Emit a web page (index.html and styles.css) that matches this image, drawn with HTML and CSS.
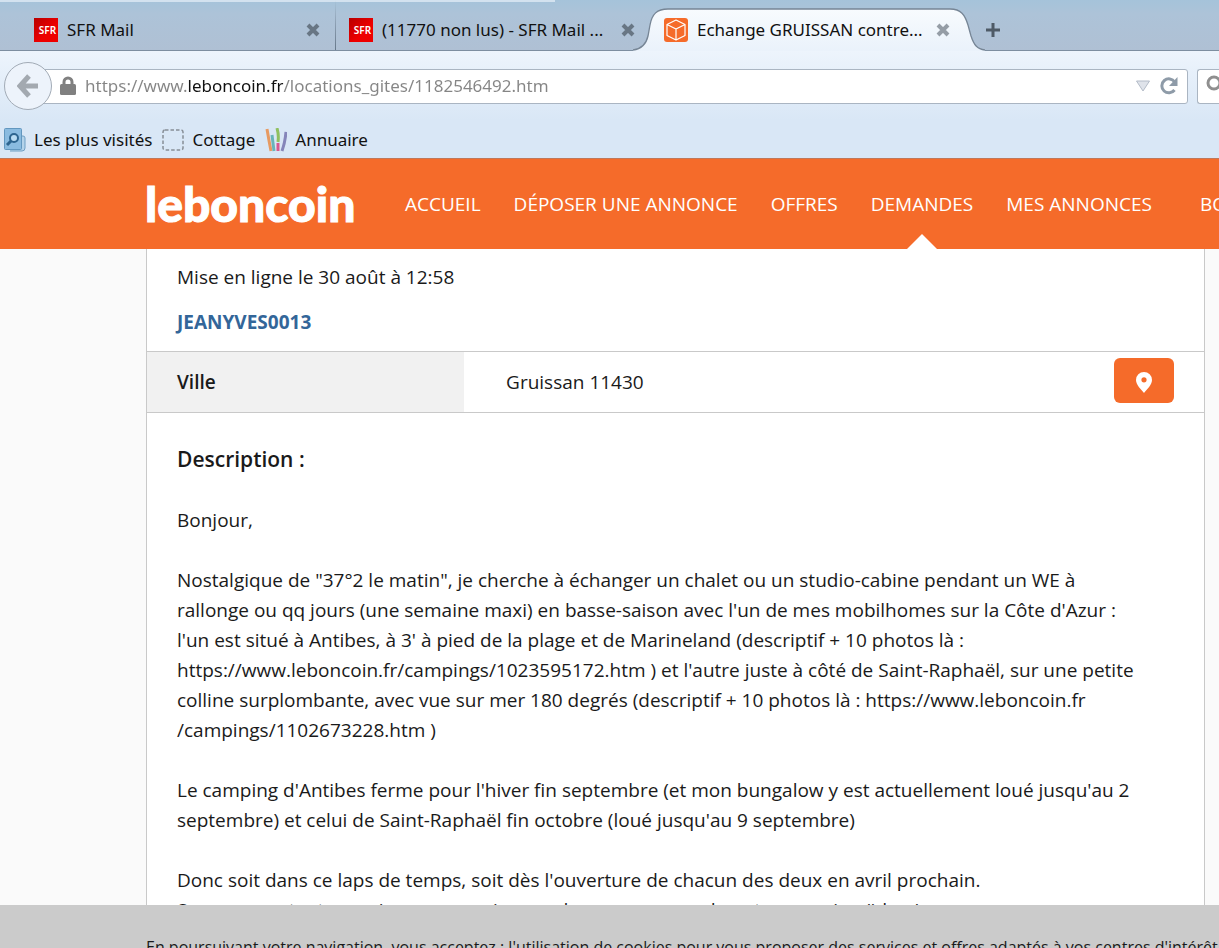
FILE: index.html
```html
<!DOCTYPE html>
<html lang="fr">
<head>
    <meta charset="UTF-8">
    <meta name="viewport" content="width=device-width, initial-scale=1.0">
    <title>Echange GRUISSAN contre...</title>
    <link rel="stylesheet" href="styles.css">
</head>
<body>
    <!-- Fenêtre du navigateur -->
    <div class="browser">
        <div class="tabs">
            <div class="tab">
                <span class="sfr">SFR</span>
                <span class="tab-title">SFR Mail</span>
                <button class="close" aria-label="Fermer l'onglet"><svg width="14" height="14" viewBox="0 0 14 14"><path d="M2 2l10 10M12 2L2 12"/></svg></button>
            </div>
            <div class="tab separated">
                <span class="sfr">SFR</span>
                <span class="tab-title">(11770 non lus) - SFR Mail ...</span>
                <button class="close" aria-label="Fermer l'onglet"><svg width="14" height="14" viewBox="0 0 14 14"><path d="M2 2l10 10M12 2L2 12"/></svg></button>
            </div>
            <div class="tab active">
                <svg class="tab-shape" width="352" height="43" viewBox="0 0 352 43">
                    <defs>
                        <linearGradient id="tabFill" x1="0" y1="0" x2="0" y2="1">
                            <stop offset="0" stop-color="#f8fbfe"/>
                            <stop offset="1" stop-color="#eaf2fb"/>
                        </linearGradient>
                    </defs>
                    <path fill="url(#tabFill)" d="M0 43V42C8 41 13 37 15 28L17 17C19 6 24 1 35 1H317C328 1 332 7 335 17L338 28C341 37 344 41 352 42V43Z"/>
                    <path fill="none" stroke="#768595" stroke-width="1.3" d="M0 42C8 41 13 37 15 28L17 17C19 6 24 1 35 1H317C328 1 332 7 335 17L338 28C341 37 344 41 352 42"/>
                </svg>
                <svg class="favicon" width="24" height="24" viewBox="0 0 24 24">
                    <rect width="24" height="24" rx="3" fill="#f56b2a"/>
                    <path fill="none" stroke="#fff" stroke-width="1.2" stroke-linejoin="round" d="M12 2L21 6.500v11L12 22L3 17.500v-11zM3 6.500l9 4.500L21 6.500M12 11V22"/>
                </svg>
                <span class="tab-title">Echange GRUISSAN contre...</span>
                <button class="close pale" aria-label="Fermer l'onglet"><svg width="14" height="14" viewBox="0 0 14 14"><path d="M2 2l10 10M12 2L2 12"/></svg></button>
            </div>
            <button class="new-tab" aria-label="Nouvel onglet"><svg width="16" height="16" viewBox="0 0 16 16"><path d="M8 1v14M1 8h14"/></svg></button>
        </div>

        <div class="toolbar">
            <button class="back" aria-label="Page précédente">
                <svg width="22" height="24" viewBox="0 0 22 24"><path d="M12 2L3 12l9 10M3 12h18" fill="none" stroke="#a3a9b0" stroke-width="5"/></svg>
            </button>
            <div class="url-box">
                <svg width="16" height="20" viewBox="0 0 16 20"><path d="M4 9V6a4 4 0 0 1 8 0v3" fill="none" stroke="#808080" stroke-width="3"/><rect y="8" width="16" height="11" rx="1.500" fill="#808080"/></svg>
                <input class="url" type="text" aria-label="Adresse" value="https://www.leboncoin.fr/locations_gites/1182546492.htm">
                <button class="url-button" aria-label="Historique"><svg width="16" height="12" viewBox="0 0 16 12"><path d="M1.500 1h13L8 11z" fill="#dfe3ea" stroke="#b4bcc8"/></svg></button>
                <button class="url-button" aria-label="Actualiser"><svg width="18" height="18" viewBox="0 0 18 18"><path d="M14.500 13a7 7 0 1 1 .200-8" fill="none" stroke="#8e9ba8" stroke-width="3"/><path d="M17.500 0v9H9z" fill="#8e9ba8"/></svg></button>
            </div>
            <div class="search-box">
                <svg width="24" height="24" viewBox="0 0 24 24"><circle cx="8" cy="8" r="6" fill="none" stroke="#8f8f8f" stroke-width="3"/></svg>
            </div>
        </div>

        <div class="bookmarks">
            <a href="#">
                <svg width="22" height="24" viewBox="0 0 22 24"><path d="M16 8h3q2 0 2 2v10q0 3-3 3H6" fill="#b4d3ea" stroke="#6f9fc4"/><rect x=".5" y=".5" width="17" height="21" rx="1" fill="#8abbe0" stroke="#6297bf"/><circle cx="10" cy="10" r="4" fill="#b9dbf2" stroke="#2d648f" stroke-width="2"/><path d="M7 13l-4 4" stroke="#2d648f" stroke-width="3"/></svg>
                Les plus visités
            </a>
            <a href="#">
                <svg width="22" height="22" viewBox="0 0 22 22"><rect x="1" y="1" width="20" height="20" rx="2" fill="none" stroke="#878e96" stroke-width="1.500" stroke-dasharray="3.500 2"/></svg>
                Cottage
            </a>
            <a href="#">
                <svg width="22" height="24" viewBox="0 0 22 24"><g fill="none" stroke-width="3"><path d="M2 1q2 12 4 22" stroke="#e79a62"/><path d="M7 7q1 8 2 16" stroke="#68b4b9"/><path d="M12 0q2 7 1 14" stroke="#8fc05f"/><path d="M13 15v8" stroke="#d6588e"/><path d="M21 4q-1 11-4 19" stroke="#8585b9"/></g></svg>
                Annuaire
            </a>
        </div>
    </div>

    <!-- En-tête du site -->
    <header class="header">
        <a class="logo" href="#">leboncoin</a>
        <nav class="menu">
            <a href="#">ACCUEIL</a>
            <a href="#">DÉPOSER UNE ANNONCE</a>
            <a href="#">OFFRES</a>
            <a class="current" href="#">DEMANDES</a>
            <a href="#">MES ANNONCES</a>
            <a class="shop" href="#">BOUTIQUES</a>
        </nav>
    </header>

    <!-- Annonce -->
    <main class="page">
        <article class="ad">
            <section class="seller">
                <p>Mise en ligne le 30 août à 12:58</p>
                <a href="#">JEANYVES0013</a>
            </section>
            <section class="city">
                <h2>Ville</h2>
                <p>Gruissan 11430</p>
                <button class="map" aria-label="Voir sur la carte">
                    <svg width="16" height="21" viewBox="0 0 16 21"><path fill="#fff" fill-rule="evenodd" d="M8 0a8 8 0 0 1 8 8c0 5-5 9-8 13C5 17 0 13 0 8a8 8 0 0 1 8-8zm0 5.200a2.600 2.600 0 1 0 0 5.200a2.600 2.600 0 1 0 0-5.200z"/></svg>
                </button>
            </section>
            <section class="description">
                <h2>Description :</h2>
                <p>Bonjour,</p>
                <p>Nostalgique de "37°2 le matin", je cherche à échanger un chalet ou un studio-cabine pendant un WE à<br>
                rallonge ou qq jours (une semaine maxi) en basse-saison avec l'un de mes mobilhomes sur la Côte d'Azur :<br>
                l'un est situé à Antibes, à 3' à pied de la plage et de Marineland (descriptif + 10 photos là :<br>
                https://www.leboncoin.fr/campings/1023595172.htm ) et l'autre juste à côté de Saint-Raphaël, sur une petite<br>
                colline surplombante, avec vue sur mer 180 degrés (descriptif + 10 photos là : https://www.leboncoin.fr<br>
                /campings/1102673228.htm )</p>
                <p>Le camping d'Antibes ferme pour l'hiver fin septembre (et mon bungalow y est actuellement loué jusqu'au 2<br>
                septembre) et celui de Saint-Raphaël fin octobre (loué jusqu'au 9 septembre)</p>
                <p>Donc soit dans ce laps de temps, soit dès l'ouverture de chacun des deux en avril prochain.<br>
                Sommes partants aussi pour un mois avec deux personnes de notre camping (idem)</p>
            </section>
        </article>
    </main>

    <div class="cookies">
        <p>En poursuivant votre navigation, vous acceptez : l'utilisation de cookies pour vous proposer des services et offres adaptés à vos centres d'intérêt</p>
    </div>
</body>
</html>
```
FILE: styles.css
```css
* { box-sizing: border-box; }
body { margin: 0; height: 100vh; display: flex; flex-direction: column; overflow: hidden; font-family: "Open Sans", sans-serif; font-size: 19px; line-height: 30px; color: #1a1a1a; background: #fafafa; }
p, h2 { margin: 0; }
h2 { font-size: 19px; font-weight: 600; }
a { text-decoration: none; }
svg { display: block; flex: none; }
button { padding: 0; border: 0; background: none; cursor: pointer; }

/* Navigateur */
.browser { flex: none; font-family: "Noto Sans", sans-serif; font-size: 17px; color: #111; background: linear-gradient(#edf4fc 51px, #d9e7f6 120px); }
.tabs { display: flex; height: 51px; padding-left: 20px; background: linear-gradient(#d3e2ef, #d3e2ef) 0 0 / 555px 2px no-repeat, linear-gradient(#a5c3da, #adc3d8 14px, #afc0d4); border-bottom: 1px solid #7d8ea0; }
.tab { position: relative; flex: none; display: flex; align-items: center; gap: 9px; width: 315px; padding: 10px 15px 0 14px; white-space: nowrap; }
.separated { background: linear-gradient(transparent, #66788a) left / 1px 100% no-repeat; }
.active { width: 322px; padding-right: 22px; }
.tab > * { position: relative; }
.tab .tab-shape { position: absolute; left: -17px; top: 8px; }
.tab-title { flex: 1; min-width: 0; }
.sfr { flex: none; width: 24px; height: 24px; padding-left: 3px; background: linear-gradient(135deg, #b80000, #ee0000 60%); color: #fff; font-size: 10px; font-weight: 600; line-height: 24px; text-align: center; }
.close path { stroke: #687684; stroke-width: 4; }
.pale path { stroke: #959da6; }
.new-tab { padding: 10px 0 0 13px; }
.new-tab path { stroke: #4e5a66; stroke-width: 3; }
.toolbar { display: flex; align-items: center; height: 70px; padding-left: 4px; }
.back { position: relative; flex: none; display: grid; place-items: center; width: 48px; height: 48px; border: 1px solid #a2abb6; border-radius: 50%; background: #edf3fb; }
.url-box { flex: 1; display: flex; align-items: center; gap: 9px; height: 35px; margin-left: -12px; padding: 0 9px 0 19px; background: #fff; border: 1px solid #aab5c2; border-radius: 0 3px 3px 0; }
/* Le domaine ressort en noir dans l'adresse */
.url { flex: 1; min-width: 0; padding: 0; border: 0; outline: 0; font: inherit; color: transparent; background: linear-gradient(90deg, #858585 102px, #111 102px, #111 198px, #858585 198px); -webkit-background-clip: text; background-clip: text; }
.search-box { flex: none; width: 22px; height: 35px; margin-left: 9px; padding: 5px 0 0 8px; overflow: hidden; background: #fff; border: 1px solid #aab5c2; border-right: 0; border-radius: 3px 0 0 3px; }
.bookmarks { display: flex; gap: 10px; height: 38px; padding: 0 4px; border-bottom: 1px solid #c0785a; }
.bookmarks a { display: flex; align-items: center; gap: 8px; color: #111; }

/* En-tête */
.header { flex: none; display: flex; align-items: center; height: 90px; padding-left: 145px; overflow: hidden; background: #f56b2a; }
.logo { flex: none; width: 260px; color: #fff; font-family: Lato, sans-serif; font-size: 48px; font-weight: 900; line-height: 60px; -webkit-text-stroke: 1px #fff; }
.menu { flex: none; display: flex; gap: 33px; height: 90px; line-height: 91px; }
.menu a { position: relative; color: #fff; font-size: 19px; font-weight: 500; }
.menu .current::after { content: ""; position: absolute; left: 50%; bottom: 0; margin-left: -15px; border: 15px solid transparent; border-top: 0; border-bottom-color: #fff; }
.menu .shop { margin-left: 15px; }

/* Annonce */
.page { flex: 1; min-height: 0; overflow: hidden; padding: 0 14px 0 146px; }
.ad { background: #fff; border: 1px solid #c9c9c9; border-top: 0; }
.seller { padding: 13px 30px 14px; }
.seller p { margin-bottom: 15px; }
.seller a { display: block; color: #369; font-weight: bold; }
.city { display: flex; height: 62px; line-height: 60px; border-top: 1px solid #c9c9c9; border-bottom: 1px solid #c9c9c9; }
.city h2 { width: 30%; padding-left: 30px; background: #f1f1f1; }
.city p { flex: 1; padding-left: 42px; }
.map { display: grid; place-items: center; width: 60px; height: 45px; margin: 6px 30px 0 0; padding-top: 4px; background: #f56b2a; border-radius: 6px; }
.description { padding: 31px 30px; white-space: nowrap; }
.description h2 { margin-bottom: 31px; font-size: 21px; }
.description p { margin-bottom: 30px; }

/* Bandeau cookies */
.cookies { flex: none; height: 43px; padding: 27px 0 0 146px; overflow: hidden; background: #cbcbcb; font-size: 16px; white-space: nowrap; }
```
